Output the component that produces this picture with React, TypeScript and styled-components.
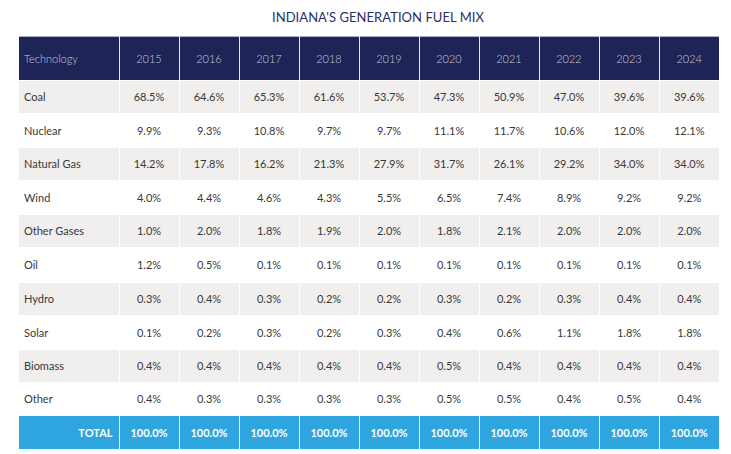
import React from "react";
import styled, { createGlobalStyle } from "styled-components";

const years = ["2015", "2016", "2017", "2018", "2019", "2020", "2021", "2022", "2023", "2024"];

const rows: { name: string; values: string[]; h: number }[] = [
  { name: "Coal", values: ["68.5%", "64.6%", "65.3%", "61.6%", "53.7%", "47.3%", "50.9%", "47.0%", "39.6%", "39.6%"], h: 32 },
  { name: "Nuclear", values: ["9.9%", "9.3%", "10.8%", "9.7%", "9.7%", "11.1%", "11.7%", "10.6%", "12.0%", "12.1%"], h: 35 },
  { name: "Natural Gas", values: ["14.2%", "17.8%", "16.2%", "21.3%", "27.9%", "31.7%", "26.1%", "29.2%", "34.0%", "34.0%"], h: 32 },
  { name: "Wind", values: ["4.0%", "4.4%", "4.6%", "4.3%", "5.5%", "6.5%", "7.4%", "8.9%", "9.2%", "9.2%"], h: 35 },
  { name: "Other Gases", values: ["1.0%", "2.0%", "1.8%", "1.9%", "2.0%", "1.8%", "2.1%", "2.0%", "2.0%", "2.0%"], h: 32 },
  { name: "Oil", values: ["1.2%", "0.5%", "0.1%", "0.1%", "0.1%", "0.1%", "0.1%", "0.1%", "0.1%", "0.1%"], h: 36 },
  { name: "Hydro", values: ["0.3%", "0.4%", "0.3%", "0.2%", "0.2%", "0.3%", "0.2%", "0.3%", "0.4%", "0.4%"], h: 32 },
  { name: "Solar", values: ["0.1%", "0.2%", "0.3%", "0.2%", "0.3%", "0.4%", "0.6%", "1.1%", "1.8%", "1.8%"], h: 35 },
  { name: "Biomass", values: ["0.4%", "0.4%", "0.4%", "0.4%", "0.4%", "0.5%", "0.4%", "0.4%", "0.4%", "0.4%"], h: 32 },
  { name: "Other", values: ["0.4%", "0.3%", "0.3%", "0.3%", "0.3%", "0.5%", "0.5%", "0.4%", "0.5%", "0.4%"], h: 34 },
];

const GlobalStyle = createGlobalStyle`
  body {
    margin: 0;
    background: #ffffff;
    font-family: Lato, "Open Sans", sans-serif;
  }
`;

const Page = styled.div`
  width: 731px;
  padding: 9px 0 0 19px;
  box-sizing: border-box;
`;

// title sits a little right of the table's centre in the source
const Title = styled.h1`
  width: 700px;
  margin: 0 0 11px;
  padding-left: 18px;
  box-sizing: border-box;
  text-align: center;
  font-size: 13px;
  font-weight: 400;
  letter-spacing: 0.05px;
  color: #2b2f68;
  line-height: 16px;
`;

const Table = styled.table`
  width: 700px;
  border-collapse: collapse;
  table-layout: fixed;
  font-size: 11px;
`;

const HeadRow = styled.tr`
  height: 44px;
  background: #1f2456;
  border-top: 1px solid #aeb0c6;
`;

const HeadCell = styled.th<{ $first?: boolean }>`
  padding: 0 ${(p) => (p.$first ? "5px" : "0")};
  text-align: ${(p) => (p.$first ? "left" : "center")};
  font-weight: 300;
  color: #c8c9de;
  border-right: 1px solid #e8e8f0;
  border-bottom: 1px solid #ffffff;
  &:last-child {
    border-right: none;
  }
`;

const Row = styled.tr<{ $striped: boolean }>`
  background: ${(p) => (p.$striped ? "#f0efee" : "#ffffff")};
`;

const Cell = styled.td<{ $first?: boolean }>`
  padding: 0 ${(p) => (p.$first ? "5px" : "0")};
  text-align: ${(p) => (p.$first ? "left" : "center")};
  color: #383838;
  border-right: 1px solid #ffffff;
  &:last-child {
    border-right: none;
  }
`;

const TotalRow = styled.tr`
  height: 33px;
  background: #2ea5de;
`;

const TotalCell = styled.td<{ $first?: boolean }>`
  padding: 0 ${(p) => (p.$first ? "6px" : "0")};
  text-align: ${(p) => (p.$first ? "right" : "center")};
  color: #ffffff;
  font-weight: 700;
  border-right: 1px solid #ffffff;
  &:last-child {
    border-right: none;
  }
`;

export default function App() {
  return (
    <Page>
      <GlobalStyle />
      <Title>INDIANA'S GENERATION FUEL MIX</Title>
      <Table>
        <colgroup>
          <col style={{ width: 100 }} />
          {years.map((y) => (
            <col key={y} style={{ width: 60 }} />
          ))}
        </colgroup>
        <thead>
          <HeadRow>
            <HeadCell $first>Technology</HeadCell>
            {years.map((y) => (
              <HeadCell key={y}>{y}</HeadCell>
            ))}
          </HeadRow>
        </thead>
        <tbody>
          {rows.map((r, i) => (
            <Row key={r.name} $striped={i % 2 === 0} style={{ height: r.h }}>
              <Cell $first>{r.name}</Cell>
              {r.values.map((v, j) => (
                <Cell key={j}>{v}</Cell>
              ))}
            </Row>
          ))}
          <TotalRow>
            <TotalCell $first>TOTAL</TotalCell>
            {years.map((y) => (
              <TotalCell key={y}>100.0%</TotalCell>
            ))}
          </TotalRow>
        </tbody>
      </Table>
    </Page>
  );
}
